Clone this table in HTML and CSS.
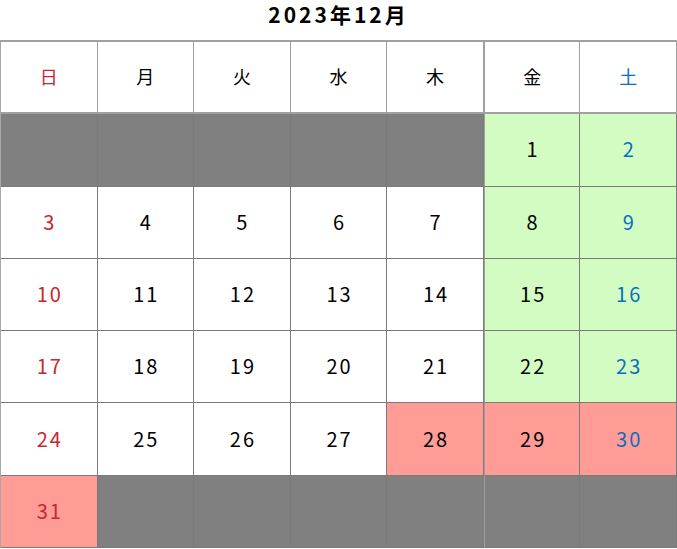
FILE: index.html
```html
<!DOCTYPE html>
<html lang="ja">
<head>
<meta charset="utf-8">
<link rel="stylesheet" href="styles.css">
</head>
<body>
<div class="title">2023年12月</div>
<div class="cal">
  <div class="c hd sun">日</div>
  <div class="c hd">月</div>
  <div class="c hd">火</div>
  <div class="c hd">水</div>
  <div class="c hd">木</div>
  <div class="c hd fri">金</div>
  <div class="c hd sat">土</div>

  <div class="c empty"></div>
  <div class="c empty"></div>
  <div class="c empty"></div>
  <div class="c empty"></div>
  <div class="c empty"></div>
  <div class="c green fri">1</div>
  <div class="c green sat">2</div>

  <div class="c sun">3</div>
  <div class="c">4</div>
  <div class="c">5</div>
  <div class="c">6</div>
  <div class="c">7</div>
  <div class="c green fri">8</div>
  <div class="c green sat">9</div>

  <div class="c sun">10</div>
  <div class="c">11</div>
  <div class="c">12</div>
  <div class="c">13</div>
  <div class="c">14</div>
  <div class="c green fri">15</div>
  <div class="c green sat">16</div>

  <div class="c sun">17</div>
  <div class="c">18</div>
  <div class="c">19</div>
  <div class="c">20</div>
  <div class="c">21</div>
  <div class="c green fri">22</div>
  <div class="c green sat">23</div>

  <div class="c sun">24</div>
  <div class="c">25</div>
  <div class="c">26</div>
  <div class="c">27</div>
  <div class="c red">28</div>
  <div class="c red fri">29</div>
  <div class="c red sat">30</div>

  <div class="c red sun">31</div>
  <div class="c empty"></div>
  <div class="c empty"></div>
  <div class="c empty"></div>
  <div class="c empty"></div>
  <div class="c empty fri"></div>
  <div class="c empty"></div>
</div>
</body>
</html>
```
FILE: styles.css
```css
html, body {
  margin: 0;
  padding: 0;
  background: #ffffff;
}
body {
  width: 677px;
  height: 549px;
  overflow: hidden;
  font-family: "Noto Sans CJK JP", "Noto Sans", sans-serif;
  color: #000;
}
.title {
  height: 40px;
  text-align: center;
  font-weight: bold;
  font-size: 21px;
  letter-spacing: 3px;
  line-height: 28px;
}
.cal {
  display: grid;
  grid-template-columns: repeat(7, 1fr);
  grid-template-rows: repeat(7, 1fr);
  width: 677px;
  height: 508px;
  box-sizing: border-box;
  border-top: 2px solid #a0a0a0;
  border-left: 1px solid #a8a8a8;
}
.c {
  display: flex;
  align-items: center;
  justify-content: center;
  border-right: 1px solid #7a7a7a;
  border-bottom: 1px solid #7a7a7a;
  font-size: 20px;
  letter-spacing: 2px;
  padding-left: 2px;
  padding-bottom: 2px;
  background: #ffffff;
}
.hd {
  font-size: 18px;
  letter-spacing: 0;
  padding-left: 0;
  padding-bottom: 2px;
  border-right-color: #a0a0a0;
  border-bottom: 2px solid #a0a0a0;
}
.fri {
  border-left: 1px solid #a0a0a0;
}
.sun { color: #c8262f; }
.sat { color: #0a6fc2; }
.empty { background: #808080; }
.green { background: #d2fcc2; }
.red { background: #ff9c96; }
```
